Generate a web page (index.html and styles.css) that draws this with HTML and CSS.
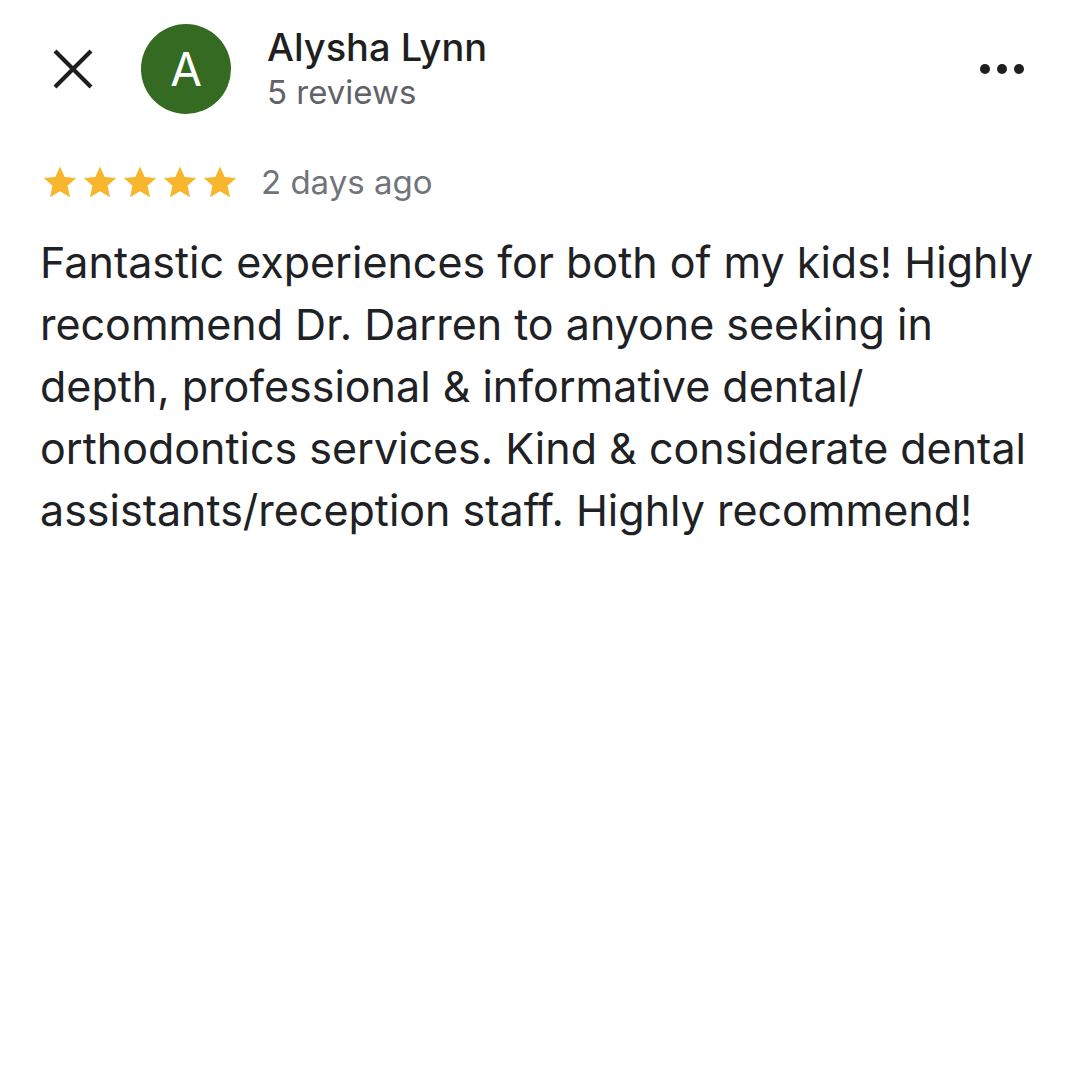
FILE: index.html
```html
<!DOCTYPE html>
<html>
<head>
<meta charset="utf-8">
<link rel="stylesheet" href="styles.css">
</head>
<body>
<div class="page">
  <header class="top">
    <button class="close" aria-label="Close">
      <svg width="40" height="40" viewBox="0 0 40 40"><path d="M2 2 L38 38 M38 2 L2 38" stroke="#1f1f1f" stroke-width="4.2" stroke-linecap="butt"/></svg>
    </button>
    <div class="avatar">A</div>
    <div class="who">
      <div class="name">Alysha Lynn</div>
      <div class="count">5 reviews</div>
    </div>
    <div class="more" aria-label="More">
      <span class="dot"></span><span class="dot"></span><span class="dot"></span>
    </div>
  </header>
  <div class="meta">
    <div class="stars">
      <svg class="star" viewBox="0 0 24 24"><path d="M12 1.6l3.1 7.1 7.7.7-5.8 5.1 1.7 7.6L12 18.1 5.3 22.1 7 14.5 1.2 9.4l7.7-.7z"/></svg>
      <svg class="star" viewBox="0 0 24 24"><path d="M12 1.6l3.1 7.1 7.7.7-5.8 5.1 1.7 7.6L12 18.1 5.3 22.1 7 14.5 1.2 9.4l7.7-.7z"/></svg>
      <svg class="star" viewBox="0 0 24 24"><path d="M12 1.6l3.1 7.1 7.7.7-5.8 5.1 1.7 7.6L12 18.1 5.3 22.1 7 14.5 1.2 9.4l7.7-.7z"/></svg>
      <svg class="star" viewBox="0 0 24 24"><path d="M12 1.6l3.1 7.1 7.7.7-5.8 5.1 1.7 7.6L12 18.1 5.3 22.1 7 14.5 1.2 9.4l7.7-.7z"/></svg>
      <svg class="star" viewBox="0 0 24 24"><path d="M12 1.6l3.1 7.1 7.7.7-5.8 5.1 1.7 7.6L12 18.1 5.3 22.1 7 14.5 1.2 9.4l7.7-.7z"/></svg>
    </div>
    <span class="when">2 days ago</span>
  </div>
  <p class="review">Fantastic experiences for both of my kids! Highly recommend Dr. Darren to anyone seeking in depth, professional &amp; informative dental/ orthodontics services. Kind &amp; considerate dental assistants/reception staff. Highly recommend!</p>
</div>
</body>
</html>
```
FILE: styles.css
```css
* { box-sizing: border-box; }
html, body { margin: 0; padding: 0; background: #fff; }
body { font-family: Inter, "Noto Sans", "Liberation Sans", sans-serif; color: #1f1f1f; }
.page { width: 1080px; height: 1080px; padding: 24px 40px 0 40px; }
.top { display: flex; align-items: center; height: 90px; }
.close { width: 40px; height: 40px; padding: 0; margin-left: 13px; border: none; background: none; display: flex; }
.avatar { width: 90px; height: 90px; border-radius: 50%; background: #346a21; color: #fff; display: flex; align-items: center; justify-content: center; font-size: 46px; font-weight: 400; margin-left: 48px; }
.who { margin-left: 36px; display: flex; flex-direction: column; flex: 1; }
.name { font-size: 38px; line-height: 46px; font-weight: 500; color: #1f1f1f; margin-top: 0; }
.count { font-size: 33px; line-height: 44px; color: #5f6368; }
.more { display: flex; gap: 7px; margin-right: 16px; }
.dot { width: 10px; height: 10px; border-radius: 50%; background: #1f1f1f; }
.meta { display: flex; align-items: center; margin-top: 46px; height: 44px; }
.stars { display: flex; gap: 4px; margin-left: 2px; }
.star { width: 36px; height: 36px; fill: #f8b62c; }
.when { font-size: 33px; color: #70757a; margin-left: 23px; }
.review { margin: 27px 0 0 0; font-size: 43px; line-height: 62px; color: #202124; }
```
